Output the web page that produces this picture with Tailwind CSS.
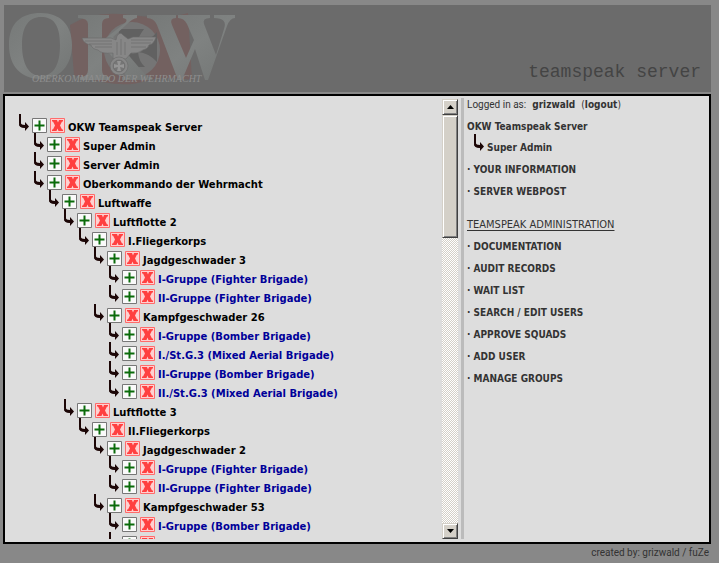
<!DOCTYPE html>
<html lang="en">
<head>
<meta charset="utf-8">
<title>OKW Teamspeak Server</title>
<script src="https://cdn.jsdelivr.net/npm/@tailwindcss/browser@4"></script>
</head>
<body class="h-screen overflow-hidden bg-[#888888] font-['DejaVu_Sans_Condensed','DejaVu_Sans',sans-serif] text-[10px] text-[#333333] flex flex-col pt-[5px] pl-[3px] pr-2">
<svg class="hidden" aria-hidden="true">
  <symbol id="arrow" viewBox="0 0 10 17"><path d="M1 0V9Q1 12.500 5 12.500H7" fill="none" stroke="#1c0606" stroke-width="2"/><path d="M1 8.500Q2 11 6 11V8L10 12.500L6 17V14Q1 14 0 11Z" fill="#1c0606"/></symbol>
  <symbol id="plus" viewBox="0 0 15 15"><path d="M.5 .5H14.500V14.500H.5Z" fill="#fafafa" stroke="#777"/><path d="M7.500 2.500V12.500M2.500 7.500H12.500" stroke="#0a6b0a" stroke-width="2"/></symbol>
  <symbol id="cross" viewBox="0 0 15 15"><path d="M.5 .5H14.500V14.500H.5Z" fill="#ffd0d0" stroke="#ff6b6b"/><path d="M2 2H7L8 4.500L9 2H13V3.500H12L10 7.500L12 11.500H13V13H8.500L7.500 10.500L6.500 13H2V11.500H3L5 7.500L3 3.500H2Z" fill="#ff4040"/></symbol>
</svg>
<header class="ml-px flex h-[87px] shrink-0 items-end justify-between bg-[#6b6b6b] pr-[10px]">
  <svg class="h-[87px] w-[236px]" viewBox="0 0 236 87" role="img" aria-label="OKW Oberkommando der Wehrmacht">
    <defs><linearGradient id="metal" x1="0" x2="1" y1="0" y2="1"><stop offset="0" stop-color="#767978"/><stop offset=".5" stop-color="#7f8281"/><stop offset="1" stop-color="#737675"/></linearGradient></defs>
    <path d="M66 20Q90 5 126 10T184 8L188 75Q160 70 138 77T70 70Z" fill="#736160"/>
    <circle cx="128" cy="45" r="28" fill="#757575"/>
    <path d="M115 24H140Q134 32 133 38Q145 37 153 27V57Q145 48 134 47Q135 57 141 62H114Z" fill="#616161"/>
    <g fill="url(#metal)">
      <path fill-rule="evenodd" d="M37 8C56 8 68 20 68 40S56 74 37 74S5 62 5 40S17 8 37 8ZM37 12C25 12 18 21 18 40S25 71 37 71S56 61 56 40S49 12 37 12Z"/>
      <path d="M74 10H105V13Q98 13 98 19V36L121 18Q125 14 119 13V10H133V13Q129 13 122 20L109 32L138 66Q143 72 148 72V75H118V72Q124 72 120 67L98 39V65Q98 72 105 72V75H76V72Q84 72 84 65V19Q84 13 74 13Z"/>
      <path d="M143 10H172V13Q165 13 168 20L182 53L190 35L183 19Q180 13 174 13V10H206V13Q198 13 200 19L212 50L220 24Q224 13 210 13V10H231V13Q226 13 223 21L204 75H201L191 44L178 75H174L153 20Q150 13 143 13Z"/>
    </g>
    <g fill="#878787" stroke="#6a6a6a" stroke-width=".6">
      <path d="M78 33H107L112 35L113 31Q116 26 119 30L124 34L129 32H152Q150 39 145 40Q144 44 139 45Q134 49 127 48L122 54H109L109 48Q97 49 94 45Q88 44 87 40Q80 39 78 33Z"/>
      <path d="M81 36H108M85 39H108M91 42H108M127 35H149M127 38H147M127 42H142M113 37V50M117 34V50M121 37V50" fill="none"/>
      <circle cx="115" cy="61" r="9"/><circle cx="115" cy="61" r="6" fill="#757575"/>
      <path d="M113 56H117L116 60L120 59V63L116 62L117 66H113L114 62L110 63V59L114 60Z" fill="#959595" stroke="none"/>
    </g>
    <text x="28" y="77" class="font-['Liberation_Serif',serif] text-[10px] italic" fill="#8e8e8e">OBERKOMMANDO DER WEHRMACHT</text>
  </svg>
  <h1 class="pb-[10px] font-['Liberation_Mono',monospace] text-[18px] leading-5 text-[#444444]">teamspeak server</h1>
</header>
<main class="mt-0.5 flex min-h-0 flex-1 border-2 border-black bg-[#dddddd] pt-0.5 pb-[3px]">
  <section class="min-w-0 flex-1 overflow-hidden pt-4 pl-[14px] font-['DejaVu_Sans',sans-serif] text-[10px] font-bold text-black" aria-label="Server groups"><ul id="tree"></ul></section>
  <div class="mt-px flex w-4 shrink-0 flex-col bg-[repeating-conic-gradient(#ffffff_0_25%,#d4d0c8_0_50%)] bg-[length:2px_2px]">
    <button class="flex h-4 shrink-0 items-center justify-center border border-t-[#d4d0c8] border-l-[#d4d0c8] border-r-[#404040] border-b-[#404040] bg-[#d4d0c8] shadow-[inset_1px_1px_#ffffff,inset_-1px_-1px_#808080]" aria-label="Scroll up"><svg class="h-1 w-[7px]" viewBox="0 0 7 4"><path d="M0 4L3.500 0L7 4Z"/></svg></button>
    <div class="h-[123px] border border-t-[#d4d0c8] border-l-[#d4d0c8] border-r-[#404040] border-b-[#404040] bg-[#d4d0c8] shadow-[inset_1px_1px_#ffffff,inset_-1px_-1px_#808080]"></div>
    <button class="mt-auto flex h-4 shrink-0 items-center justify-center border border-t-[#d4d0c8] border-l-[#d4d0c8] border-r-[#404040] border-b-[#404040] bg-[#d4d0c8] shadow-[inset_1px_1px_#ffffff,inset_-1px_-1px_#808080]" aria-label="Scroll down"><svg class="h-1 w-[7px]" viewBox="0 0 7 4"><path d="M0 0L3.500 4L7 0Z"/></svg></button>
  </div>
  <aside class="ml-[3px] w-[248px] shrink-0 border-l-[3px] border-[#bbbbbb] pl-[3px] leading-[14px]">
    <p class="flex gap-1.5"><span class="font-[Roboto,sans-serif]">Logged in as:</span><b>grizwald</b><span>(<a href="#" class="font-bold">logout</a>)</span></p>
    <p class="mt-2 font-bold">OKW Teamspeak Server</p>
    <p class="flex h-[21px] items-end gap-[3px] pl-[7px] font-bold"><svg class="mb-1 h-[17px] w-[10px]"><use href="#arrow"/></svg>Super Admin</p>
    <nav class="font-bold">
      <ul class="mt-2 flex flex-col gap-2"><li>· <a href="#">YOUR INFORMATION</a></li><li>· <a href="#">SERVER WEBPOST</a></li></ul>
      <h2 class="mt-[19px] text-[11px] font-normal underline underline-offset-2">TEAMSPEAK ADMINISTRATION</h2>
      <ul class="mt-2 flex flex-col gap-2"><li>· <a href="#">DOCUMENTATION</a></li><li>· <a href="#">AUDIT RECORDS</a></li><li>· <a href="#">WAIT LIST</a></li><li>· <a href="#">SEARCH / EDIT USERS</a></li><li>· <a href="#">APPROVE SQUADS</a></li><li>· <a href="#">ADD USER</a></li><li>· <a href="#">MANAGE GROUPS</a></li></ul>
    </nav>
  </aside>
</main>
<footer class="h-[19px] shrink-0 pt-0.5 pr-0.5 text-right font-[Roboto,sans-serif] leading-[14px]">created by: grizwald / fuZe</footer>
<script>
const groups = [
  [0, 'OKW Teamspeak Server'], [1, 'Super Admin'], [1, 'Server Admin'], [1, 'Oberkommando der Wehrmacht'],
  [2, 'Luftwaffe'], [3, 'Luftflotte 2'], [4, 'I.Fliegerkorps'], [5, 'Jagdgeschwader 3'],
  [6, 'I-Gruppe (Fighter Brigade)'], [6, 'II-Gruppe (Fighter Brigade)'], [5, 'Kampfgeschwader 26'],
  [6, 'I-Gruppe (Bomber Brigade)'], [6, 'I./St.G.3 (Mixed Aerial Brigade)'], [6, 'II-Gruppe (Bomber Brigade)'],
  [6, 'II./St.G.3 (Mixed Aerial Brigade)'], [3, 'Luftflotte 3'], [4, 'II.Fliegerkorps'], [5, 'Jagdgeschwader 2'],
  [6, 'I-Gruppe (Fighter Brigade)'], [6, 'II-Gruppe (Fighter Brigade)'], [5, 'Kampfgeschwader 53'],
  [6, 'I-Gruppe (Bomber Brigade)'], [6, '']
];
document.getElementById('tree').innerHTML = groups.map(([level, name]) => `
  <li class="flex h-[19px] items-start whitespace-nowrap" style="padding-left:${level * 15}px">
    <svg class="mr-[3px] h-[17px] w-[10px] shrink-0"><use href="#arrow"/></svg>
    <button class="mt-1 mr-[3px] size-[15px] shrink-0" aria-label="Add to ${name}"><svg class="size-[15px]"><use href="#plus"/></svg></button>
    <button class="mt-1 mr-[3px] size-[15px] shrink-0" aria-label="Delete ${name}"><svg class="size-[15px]"><use href="#cross"/></svg></button>
    ${level === 6 ? `<a href="#" class="mt-[7px] leading-[14px] text-[#000099]">${name}</a>` : `<span class="mt-[7px] leading-[14px]">${name}</span>`}
  </li>`).join('');
</script>
</body>
</html>
